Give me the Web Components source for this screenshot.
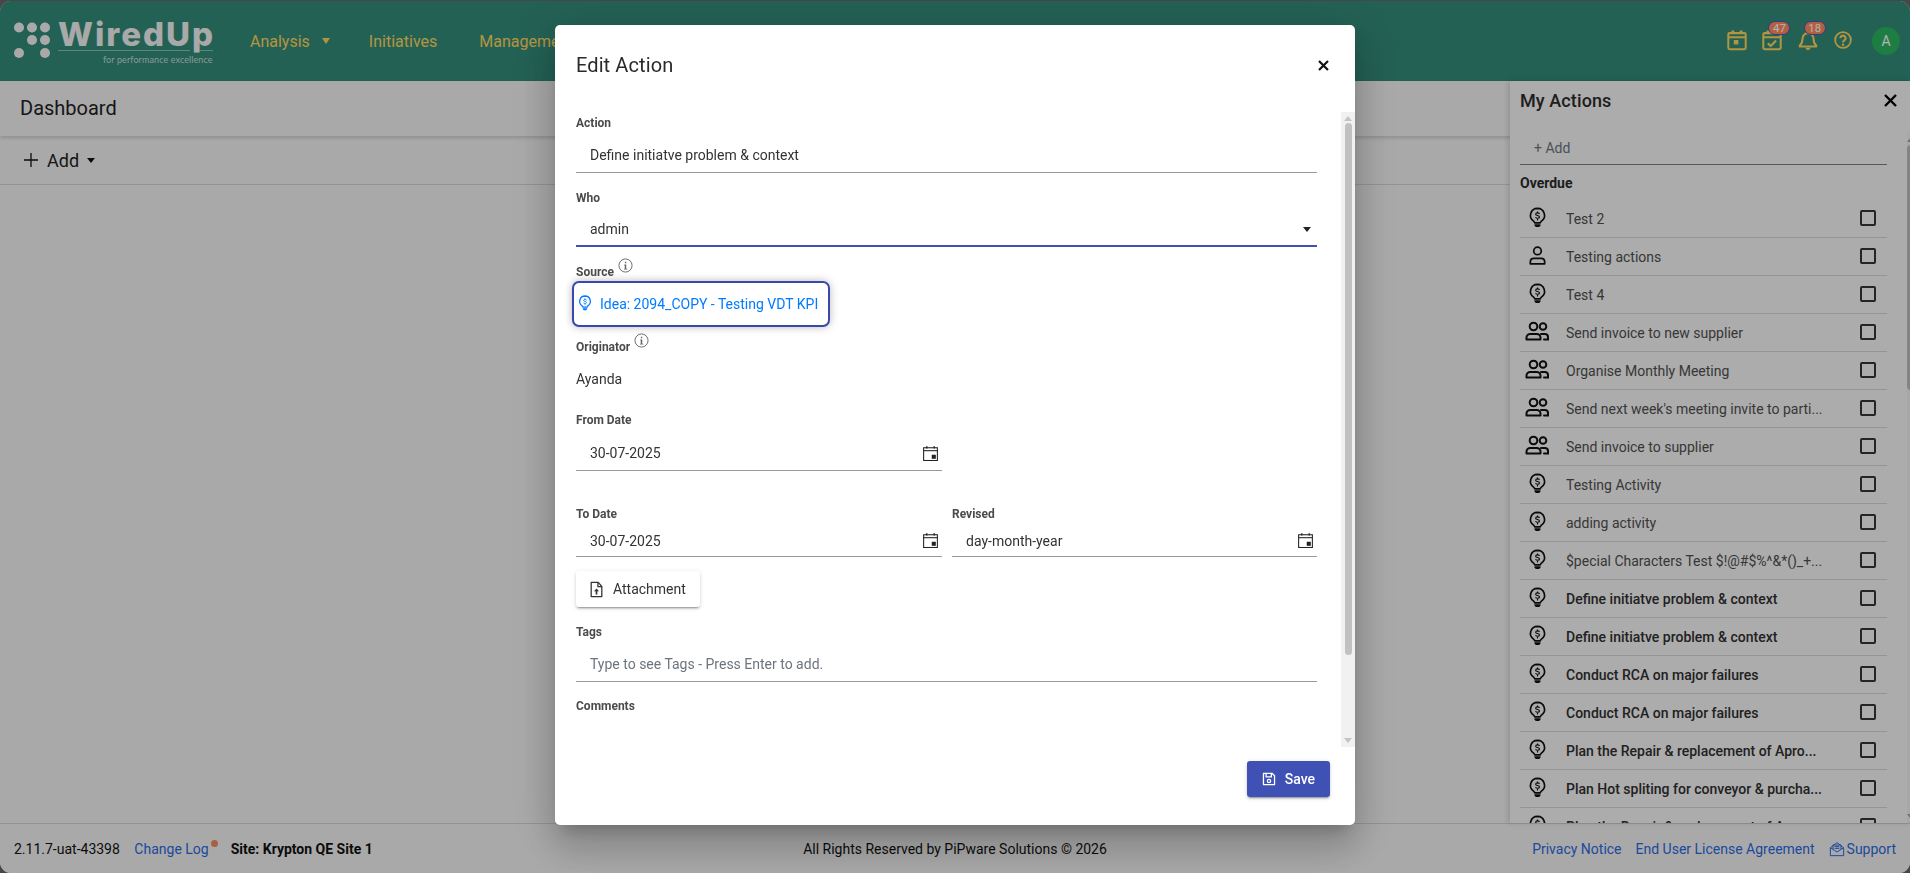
<!DOCTYPE html>
<html lang="en">
<head>
<meta charset="utf-8">
<title>WiredUp - Dashboard</title>
<style>
    html, body { margin: 0; padding: 0; height: 100%; background: #666; overflow: hidden; }
    body { font-family: Roboto, "Liberation Sans", sans-serif; font-size: 14px; padding-top: 1px; box-sizing: border-box; }
</style>
</head>
<body>
<wu-app>
    <wu-topbar slot="top"></wu-topbar>
    <wu-pagehead slot="top"></wu-pagehead>
    <wu-actions-panel slot="panel">
        <wu-action-row icon="bulb">Test 2</wu-action-row>
        <wu-action-row icon="person">Testing actions</wu-action-row>
        <wu-action-row icon="bulb">Test 4</wu-action-row>
        <wu-action-row icon="people">Send invoice to new supplier</wu-action-row>
        <wu-action-row icon="people">Organise Monthly Meeting</wu-action-row>
        <wu-action-row icon="people">Send next week's meeting invite to parti...</wu-action-row>
        <wu-action-row icon="people">Send invoice to supplier</wu-action-row>
        <wu-action-row icon="bulb">Testing Activity</wu-action-row>
        <wu-action-row icon="bulb">adding activity</wu-action-row>
        <wu-action-row icon="bulb">$pecial Characters Test $!@#$%^&amp;*()_+...</wu-action-row>
        <wu-action-row icon="bulb" bold>Define initiatve problem &amp; context</wu-action-row>
        <wu-action-row icon="bulb" bold>Define initiatve problem &amp; context</wu-action-row>
        <wu-action-row icon="bulb" bold>Conduct RCA on major failures</wu-action-row>
        <wu-action-row icon="bulb" bold>Conduct RCA on major failures</wu-action-row>
        <wu-action-row icon="bulb" bold>Plan the Repair &amp; replacement of Apro...</wu-action-row>
        <wu-action-row icon="bulb" bold>Plan Hot spliting for conveyor &amp; purcha...</wu-action-row>
        <wu-action-row icon="bulb" bold>Plan the Repair &amp; replacement of Apro...</wu-action-row>
    </wu-actions-panel>
    <wu-footer slot="bottom"></wu-footer>
</wu-app>

<wu-modal heading="Edit Action">
    <wu-field label="Action" value="Define initiatve problem &amp; context" style="margin-bottom:18px"></wu-field>
    <wu-field label="Who" value="admin" type="select" height="33" style="margin-bottom:18px"></wu-field>
    <wu-field label="Source" info type="slot" style="margin-bottom:13px">
        <wu-source-link>Idea: 2094_COPY - Testing VDT KPI</wu-source-link>
    </wu-field>
    <wu-field label="Originator" info value="Ayanda" type="plain" style="margin-bottom:26px"></wu-field>
    <wu-field label="From Date" value="30-07-2025" type="date" gap="9" style="width:366px;margin-bottom:36px"></wu-field>
    <wu-date-row>
        <wu-field label="To Date" value="30-07-2025" type="date" gap="4" height="31"></wu-field>
        <wu-field label="Revised" value="day-month-year" type="date" gap="4" height="31"></wu-field>
    </wu-date-row>
    <wu-button icon="attach" style="margin:14px 0 18px">Attachment</wu-button>
    <wu-field label="Tags" placeholder="Type to see Tags - Press Enter to add." style="margin-bottom:17px"></wu-field>
    <wu-field label="Comments" type="plain"></wu-field>
    <wu-button slot="footer" icon="save" primary>Save</wu-button>
</wu-modal>

<script>
// All icons are drawn on a 24 box
const ICONS = {
    bulb: `<g fill="none" stroke="currentColor" stroke-width="1.900" stroke-linejoin="round"><path d="M12 1.500a8 8 0 0 0-4.500 14.600c.8.600 1.300 1.200 1.400 2.100h6.200c.1-.9.600-1.500 1.400-2.100A8 8 0 0 0 12 1.500z"/><path stroke-width="1.300" d="M14.300 7.800c-.5-.8-1.300-1.100-2.300-1.100-1.300 0-2.100.6-2.100 1.500 0 2 4.400 1 4.400 3.100 0 1-.9 1.500-2.300 1.500-1 0-1.800-.4-2.300-1.100M12 5.200v1.500M12 13.800v1.500"/></g><path fill="currentColor" d="M8.600 19.800h6.800v1.200l-1.500 1.900h-3.800l-1.500-1.900z"/>`,
    person: `<g fill="none" stroke="currentColor" stroke-width="2"><circle cx="12" cy="6.800" r="4.300"/><path stroke-linejoin="round" d="M3.800 21.500v-2.300c0-2.500 2-4 4.200-4h8c2.200 0 4.200 1.500 4.200 4v2.300z"/></g>`,
    people: `<g fill="none" stroke="currentColor" stroke-width="2"><circle cx="8.500" cy="7.500" r="3.800"/><path stroke-linejoin="round" d="M1.500 20.500v-2c0-2.200 1.800-3.500 3.700-3.500h6.600c1.900 0 3.700 1.300 3.700 3.500v2z"/><circle cx="18" cy="7.500" r="3.300"/><path stroke-linecap="round" d="M16 15h3.800c1.700 0 3.200 1.200 3.200 3v2.500h-4"/></g>`,
    date: `<path fill="currentColor" d="M5 .5h2.200V4H5zM16.800 .5H19V4h-2.200z"/><g fill="none" stroke="currentColor" stroke-width="1.700"><rect x="1" y="2.800" width="22" height="20.400"/><path d="M1 7.500h22"/></g><rect fill="currentColor" x="14" y="14" width="6.500" height="6.500"/>`,
    cal: `<g fill="none" stroke="currentColor" stroke-width="2.200" stroke-linejoin="round"><rect x="2.500" y="4.500" width="19" height="17.500" rx="1.500"/><path d="M2.500 9h19"/></g><path fill="currentColor" d="M6 1.500h3v3.500H6zM15 1.500h3v3.500h-3zM8.500 12h5v5h-5z"/>`,
    calcheck: `<g fill="none" stroke="currentColor" stroke-width="2.200" stroke-linejoin="round"><rect x="2.500" y="4.500" width="19" height="17.500" rx="1.500"/><path d="M2.500 9h19"/><path stroke-width="2.400" d="M7.500 15.500l3 3 6-6"/></g><path fill="currentColor" d="M6 1.500h3v3.500H6z"/>`,
    bell: `<g fill="none" stroke="currentColor" stroke-width="2.200" stroke-linejoin="round"><path d="M6 10.500a6 6 0 0 1 12 0c0 5 1 6 3 7.500v1H3v-1c2-1.500 3-2.500 3-7.500z"/></g><path fill="currentColor" d="M9.500 20.500h5c0 1.500-1 2.500-2.500 2.500s-2.500-1-2.500-2.500z"/>`,
    help: `<g fill="none" stroke="currentColor" stroke-width="2.400"><circle cx="12" cy="12" r="10.500"/><path stroke-width="2.800" d="M8.500 9.500a3.500 3.300 0 1 1 5.500 2.700c-1.300.9-2 1.500-2 3"/></g><circle fill="currentColor" cx="12" cy="18.300" r="1.700"/>`,
    info: `<g fill="none" stroke="currentColor" stroke-width="1.500"><circle cx="12" cy="12" r="10.500"/></g><path fill="currentColor" d="M10 10.500h3.200v6.500H15v1.500H9.500V17h1.300v-5H10zM11 6h2.200v2.400H11z"/>`,
    attach: `<g fill="none" stroke="currentColor" stroke-width="1.800" stroke-linejoin="round"><path d="M4.500 2h10l5 5.500V22h-15z"/><path d="M14 2v6h5.500"/></g><path fill="currentColor" d="M12 10.500l3.600 4h-2.400v4.500h-2.400v-4.500H8.400z"/>`,
    save: `<g fill="none" stroke="currentColor" stroke-width="2.200" stroke-linejoin="round"><path d="M2.500 2.500h15l4 4v15h-19z"/><path d="M7 2.500v6h9v-6"/><circle cx="12" cy="15.500" r="2.800"/></g>`,
    mail: `<g fill="none" stroke="currentColor" stroke-width="1.500" stroke-linejoin="round"><path d="M2 10l10-7.500L22 10v12H2z"/><path d="M2 10l10 6.500L22 10"/><path d="M6 12.500V6h12v6.500M8.500 8.500h7M8.500 11h7"/></g>`
};

class WuIcon extends HTMLElement {
    connectedCallback() {
        const size = this.getAttribute('size') || 24;
        this.attachShadow({ mode: 'open' }).innerHTML = `
            <style>
                :host { display: inline-flex; flex: none; width: ${size}px; height: ${size}px; }
                svg { display: block; width: 100%; height: 100%; }
            </style>
            <svg viewBox="0 0 24 24" aria-hidden="true">${ICONS[this.getAttribute('name')] || ''}</svg>
        `;
    }
}

class WuApp extends HTMLElement {
    connectedCallback() {
        this.attachShadow({ mode: 'open' }).innerHTML = `
            <style>
                :host {
                    display: flex; flex-direction: column; position: relative;
                    height: 872px; background: #f3f3f3; border-radius: 11px; overflow: hidden;
                }
                .stage { flex: 1; min-height: 0; }
            </style>
            <slot name="top"></slot>
            <div class="stage"></div>
            <slot name="panel"></slot>
            <slot name="bottom"></slot>
        `;
    }
}

class WuTopbar extends HTMLElement {
    connectedCallback() {
        this.attachShadow({ mode: 'open' }).innerHTML = `
            <style>
                :host {
                    display: flex; align-items: center; height: 80px; box-sizing: border-box;
                    background: #338b79; color: #ffd65d; font-size: 16px; padding-left: 13px;
                }
                .logo { display: block; flex: none; width: 237px; height: 80px; position: relative; }
                .word {
                    position: absolute; left: 45px; top: 13px; color: #f3f3f3;
                    font: 800 33px/40px Inter, sans-serif; letter-spacing: 2px;
                }
                .rule {
                    position: absolute; left: 45px; top: 49px; width: 155px; height: 1px;
                    background: linear-gradient(90deg, #8fbdb1 132px, transparent 132px, transparent 142px, #8fbdb1 142px);
                }
                .tag {
                    position: absolute; left: 90px; top: 53px; color: #c4dcd6;
                    font: 400 9px/12px Lato, sans-serif; letter-spacing: .1px; white-space: nowrap;
                }
                svg.dots { position: absolute; left: 0; top: 12px; width: 44px; height: 48px; fill: #f3f3f3; }
                nav { display: flex; align-items: center; gap: 42px; }
                .item { display: flex; align-items: center; white-space: nowrap; }
                .caret { width: 0; height: 0; margin: 0 -3px 0 12px; border: 4px solid transparent; border-top: 6px solid currentColor; border-bottom: 0; }
                .tools { margin-left: auto; display: flex; align-items: center; padding-right: 10px; }
                .tool { position: relative; display: flex; align-items: center; justify-content: center; width: 22px; height: 22px; margin: -2px 13.300px 0 0; }
                .badge {
                    position: absolute; left: 7px; top: -8px; width: 22px; height: 14px; box-sizing: border-box;
                    border: 1px solid #4b55c4; border-radius: 7px; background: #ff8a5b; color: #fff;
                    font-size: 11.500px; line-height: 12px; text-align: center;
                }
                .avatar {
                    width: 28px; height: 28px; margin-left: 4.700px; border-radius: 50%;
                    background: #2cb35f; color: #fff; font-size: 14px; line-height: 28px; text-align: center;
                }
            </style>
            <div class="logo">
                <svg class="dots" viewBox="0 0 44 48">
                    <circle cx="6" cy="14.500" r="5"/><circle cx="19" cy="14.500" r="5"/><circle cx="32" cy="14.500" r="5"/>
                    <circle cx="19" cy="27" r="5"/><circle cx="32" cy="27" r="5"/>
                    <circle cx="6" cy="40" r="5"/><circle cx="32" cy="40" r="5"/>
                </svg>
                <span class="word">WiredUp</span>
                <span class="rule"></span>
                <span class="tag">for performance excellence</span>
            </div>
            <nav>
                <span class="item">Analysis<i class="caret"></i></span>
                <span class="item">Initiatives</span>
                <span class="item">Management</span>
            </nav>
            <div class="tools">
                <span class="tool"><wu-icon name="cal" size="22"></wu-icon></span>
                <span class="tool"><wu-icon name="calcheck" size="22"></wu-icon><span class="badge">47</span></span>
                <span class="tool"><wu-icon name="bell" size="22"></wu-icon><span class="badge">18</span></span>
                <span class="tool"><wu-icon name="help" size="18"></wu-icon></span>
                <span class="avatar">A</span>
            </div>
        `;
    }
}

class WuPagehead extends HTMLElement {
    connectedCallback() {
        this.attachShadow({ mode: 'open' }).innerHTML = `
            <style>
                :host { display: block; color: #222; }
                .title {
                    height: 55px; box-sizing: border-box; padding: 0 20px; line-height: 55px;
                    font-size: 20px; background: #f3f3f3; box-shadow: 0 2px 4px rgba(0,0,0,.16);
                    position: relative;
                }
                .tools {
                    display: flex; align-items: center; height: 49px; box-sizing: border-box;
                    padding-left: 24px; border-bottom: 1px solid #d4d4d4; font-size: 18px;
                }
                .plus { width: 14px; height: 14px; margin-right: 9px; }
                .caret { width: 0; height: 0; margin-left: 8px; border: 4px solid transparent; border-top: 5px solid #111; border-bottom: 0; }
            </style>
            <div class="title">Dashboard</div>
            <div class="tools">
                <svg class="plus" viewBox="0 0 14 14"><path d="M7 0v14M0 7h14" stroke="#111" stroke-width="1.300"/></svg>
                <span>Add</span><i class="caret"></i>
            </div>
        `;
    }
}

class WuActionsPanel extends HTMLElement {
    connectedCallback() {
        this.attachShadow({ mode: 'open' }).innerHTML = `
            <style>
                :host {
                    position: absolute; top: 80px; right: 0; bottom: 50px; width: 400px;
                    display: flex; flex-direction: column; box-sizing: border-box;
                    background: #f6f6f6; color: #2c2c2c; box-shadow: -2px 0 6px rgba(0,0,0,.14);
                    overflow: hidden;
                }
                .head { display: flex; align-items: center; justify-content: space-between; height: 52px; flex: none; padding: 0 13px 14px 10px; box-sizing: border-box; }
                h2 { margin: 0; font-size: 18px; font-weight: 500; letter-spacing: .1px; }
                .close { width: 13px; height: 13px; }
                .body { display: flex; flex: 1; min-height: 0; }
                .list { width: 367px; margin-left: 10px; flex: none; }
                .add {
                    height: 32px; line-height: 31px; box-sizing: border-box; padding-left: 14px;
                    border-bottom: 1px solid #7f7f7f; color: #6c757d;
                }
                .group { height: 35px; line-height: 36px; font-weight: 700; }
                .track {
                    margin-left: 20px; width: 13px; background: #efefef; position: relative;
                    display: flex; flex-direction: column; align-items: center;
                }
                .up, .down { width: 0; height: 0; border: 4px solid transparent; flex: none; }
                .up { border-bottom: 5px solid #a3a3a3; border-top: 0; margin-top: 4px; }
                .down { border-top: 5px solid #a3a3a3; border-bottom: 0; margin-top: auto; margin-bottom: 4px; }
                .thumb { width: 8px; height: 245px; margin-top: 3px; border-radius: 4px; background: #bdbdbd; }
            </style>
            <div class="head">
                <h2>My Actions</h2>
                <svg class="close" viewBox="0 0 13 13"><path d="M1 1l11 11M12 1L1 12" stroke="#000" stroke-width="2.400"/></svg>
            </div>
            <div class="body">
                <div class="list">
                    <div class="add">+ Add</div>
                    <div class="group">Overdue</div>
                    <slot></slot>
                </div>
                <div class="track"><i class="up"></i><i class="thumb"></i><i class="down"></i></div>
            </div>
        `;
    }
}

class WuActionRow extends HTMLElement {
    connectedCallback() {
        const name = this.getAttribute('icon');
        const bold = this.hasAttribute('bold');
        this.attachShadow({ mode: 'open' }).innerHTML = `
            <style>
                :host {
                    display: flex; align-items: center; height: 38px; box-sizing: border-box;
                    border-bottom: 1px solid #d6d6d6;
                }
                .ic { width: 34px; margin-right: 12px; flex: none; display: flex; justify-content: center; color: #111; margin-top: -3px; }
                .txt { flex: 1; min-width: 0; white-space: nowrap; overflow: hidden; color: ${bold ? '#303030' : '#505050'}; font-weight: ${bold ? 500 : 400}; }
                .box { width: 16px; height: 16px; box-sizing: border-box; flex: none; margin: -2px 11px 0 0; border: 2px solid #353535; border-radius: 2px; }
            </style>
            <span class="ic"><wu-icon name="${name}" size="${name === 'people' ? 24 : 21}"></wu-icon></span>
            <span class="txt"><slot></slot></span>
            <i class="box"></i>
        `;
    }
}

class WuFooter extends HTMLElement {
    connectedCallback() {
        this.attachShadow({ mode: 'open' }).innerHTML = `
            <style>
                :host {
                    display: grid; grid-template-columns: 1fr auto 1fr; align-items: center;
                    height: 50px; box-sizing: border-box; padding: 0 14px; background: #f3f3f3;
                    border-top: 1px solid #d4d4d4; color: #111; font-size: 14px; white-space: nowrap;
                }
                a { color: #2a6ae0; text-decoration: none; }
                .left, .right { display: flex; align-items: center; }
                .right { justify-content: flex-end; }
                .log { position: relative; margin-left: 14.500px; margin-right: 22px; }
                .dot { position: absolute; right: -9px; top: -1px; width: 7px; height: 7px; border-radius: 50%; background: #f08a60; }
                b { font-weight: 700; }
                .right a + a { margin-left: 14px; }
                .sup { display: flex; align-items: center; gap: 2px; color: #2a6ae0; margin-left: 14px; }
            </style>
            <div class="left">
                <span>2.11.7-uat-43398</span>
                <a class="log">Change Log<i class="dot"></i></a>
                <b>Site: Krypton QE Site 1</b>
            </div>
            <div>All Rights Reserved by PiPware Solutions © 2026</div>
            <div class="right">
                <a>Privacy Notice</a>
                <a>End User License Agreement</a>
                <span class="sup"><wu-icon name="mail" size="16"></wu-icon>Support</span>
            </div>
        `;
    }
}

class WuModal extends HTMLElement {
    connectedCallback() {
        this.attachShadow({ mode: 'open' }).innerHTML = `
            <style>
                :host { position: fixed; inset: 0; display: block; background: rgba(0,0,0,.3); }
                .dialog {
                    position: absolute; left: 555px; top: 25px; width: 800px; height: 800px;
                    display: flex; flex-direction: column; background: #fff; border-radius: 5px; overflow: hidden;
                    box-shadow: 0 11px 15px -7px rgba(0,0,0,.2), 0 24px 38px 3px rgba(0,0,0,.14), 0 9px 46px 8px rgba(0,0,0,.12);
                    color: #333;
                }
                .head { height: 87px; flex: none; box-sizing: border-box; display: flex; justify-content: space-between; align-items: flex-start; padding: 28px 26px 0 21px; }
                h1 { margin: 0; font-size: 20px; line-height: 24px; font-weight: 400; letter-spacing: .1px; color: #2a2a2a; }
                .close { width: 11px; height: 11px; margin-top: 7px; }
                .middle { flex: none; height: 635px; display: flex; }
                .content { width: 751px; box-sizing: border-box; margin-left: 11px; padding: 4px 0 0 10px; overflow: hidden; flex: none; }
                .track {
                    margin-left: 24px; width: 14px; background: #f1f1f1;
                    display: flex; flex-direction: column; align-items: center;
                }
                .up, .down { width: 0; height: 0; border: 4px solid transparent; flex: none; }
                .up { border-bottom: 5px solid #c4c4c4; border-top: 0; margin-top: 4px; }
                .down { border-top: 5px solid #c4c4c4; border-bottom: 0; margin-top: auto; margin-bottom: 4px; }
                .thumb { width: 7px; height: 532px; margin-top: 2px; border-radius: 4px; background: #c1c1c1; }
                .foot { flex: 1; display: flex; justify-content: flex-end; align-items: flex-start; padding: 14px 25px 0 0; }
            </style>
            <div class="dialog">
                <div class="head">
                    <h1>${this.getAttribute('heading')}</h1>
                    <svg class="close" viewBox="0 0 11 11"><path d="M1 1l9 9M10 1l-9 9" stroke="#111" stroke-width="2.200"/></svg>
                </div>
                <div class="middle">
                    <div class="content"><slot></slot></div>
                    <div class="track"><i class="up"></i><i class="thumb"></i><i class="down"></i></div>
                </div>
                <div class="foot"><slot name="footer"></slot></div>
            </div>
        `;
    }
}

class WuField extends HTMLElement {
    connectedCallback() {
        const type = this.getAttribute('type') || 'text';
        const value = this.getAttribute('value') || '';
        const placeholder = this.getAttribute('placeholder');
        const gap = this.getAttribute('gap') || 8;
        const height = this.getAttribute('height') || 34;
        const info = this.hasAttribute('info') ? '<span class="info"><wu-icon name="info" size="15"></wu-icon></span>' : '';

        let control = '';
        if (type === 'slot') {
            control = '<slot></slot>';
        } else if (type === 'plain') {
            control = value ? `<div class="plain">${value}</div>` : '';
        } else {
            const end = type === 'date'
                ? '<span class="end"><wu-icon name="date" size="15"></wu-icon></span>'
                : type === 'select' ? '<i class="arrow"></i>' : '';
            control = `<div class="control ${type}"><span class="${placeholder ? 'ph' : ''}">${placeholder || value}</span>${end}</div>`;
        }

        this.attachShadow({ mode: 'open' }).innerHTML = `
            <style>
                :host { display: block; color: #333; }
                label { display: flex; align-items: flex-start; height: 14px; font-size: 12px; line-height: 14px; font-weight: 700; color: #4b4b4b; gap: 4px; }
                .info { margin-top: -7px; color: #666; display: flex; }
                .control {
                    display: flex; align-items: center; justify-content: space-between;
                    height: ${height}px; margin-top: ${gap}px; padding: 0 4px 0 14px;
                    border-bottom: 1px solid #9a9a9a; box-sizing: content-box; font-size: 14px;
                }
                .select { border-bottom: 2px solid #3f51b5; height: ${height - 1}px; padding-right: 6px; }
                .arrow { width: 0; height: 0; border: 4px solid transparent; border-top: 5px solid #222; border-bottom: 0; }
                .end { display: flex; color: #222; }
                .ph { color: #6c757d; }
                .plain { margin-top: 17px; font-size: 14px; line-height: 16px; }
            </style>
            <label>${this.getAttribute('label')}${info}</label>
            ${control}
        `;
    }
}

class WuDateRow extends HTMLElement {
    connectedCallback() {
        this.attachShadow({ mode: 'open' }).innerHTML = `
            <style>:host { display: grid; grid-template-columns: 366px 365px; column-gap: 10px; }</style>
            <slot></slot>
        `;
    }
}

class WuSourceLink extends HTMLElement {
    connectedCallback() {
        this.attachShadow({ mode: 'open' }).innerHTML = `
            <style>
                :host {
                    display: flex; align-items: center; box-sizing: border-box; width: 258px; height: 46px;
                    margin: 2px 0 0 -4px; padding-left: 3px; border: 2px solid #3949ab; border-radius: 7px;
                    color: #007bff; font-size: 14px; white-space: nowrap; background: #fff;
                    box-shadow: 0 0 9px rgba(0,0,0,.28);
                }
                wu-icon { margin-right: 7px; margin-top: -3px; }
            </style>
            <wu-icon name="bulb" size="16"></wu-icon><span><slot></slot></span>
        `;
    }
}

class WuButton extends HTMLElement {
    connectedCallback() {
        const primary = this.hasAttribute('primary');
        const size = primary ? 14 : 17;
        this.attachShadow({ mode: 'open' }).innerHTML = `
            <style>
                :host {
                    display: inline-flex; align-items: center; height: 36px; box-sizing: border-box; border-radius: 3px;
                    padding: ${primary ? '0 15px' : '0 14px 0 12px'}; gap: ${primary ? 9 : 8}px; font-size: 14px; white-space: nowrap;
                    background: ${primary ? '#3f51b5' : '#fff'}; color: ${primary ? '#fff' : '#333'};
                    font-weight: ${primary ? 500 : 400};
                    box-shadow: 0 3px 1px -2px rgba(0,0,0,.2), 0 2px 2px 0 rgba(0,0,0,.14), 0 1px 5px 0 rgba(0,0,0,.12);
                }
            </style>
            <wu-icon name="${this.getAttribute('icon')}" size="${size}"></wu-icon><span><slot></slot></span>
        `;
    }
}

customElements.define('wu-icon', WuIcon);
customElements.define('wu-app', WuApp);
customElements.define('wu-topbar', WuTopbar);
customElements.define('wu-pagehead', WuPagehead);
customElements.define('wu-actions-panel', WuActionsPanel);
customElements.define('wu-action-row', WuActionRow);
customElements.define('wu-footer', WuFooter);
customElements.define('wu-modal', WuModal);
customElements.define('wu-field', WuField);
customElements.define('wu-date-row', WuDateRow);
customElements.define('wu-source-link', WuSourceLink);
customElements.define('wu-button', WuButton);
</script>
</body>
</html>
